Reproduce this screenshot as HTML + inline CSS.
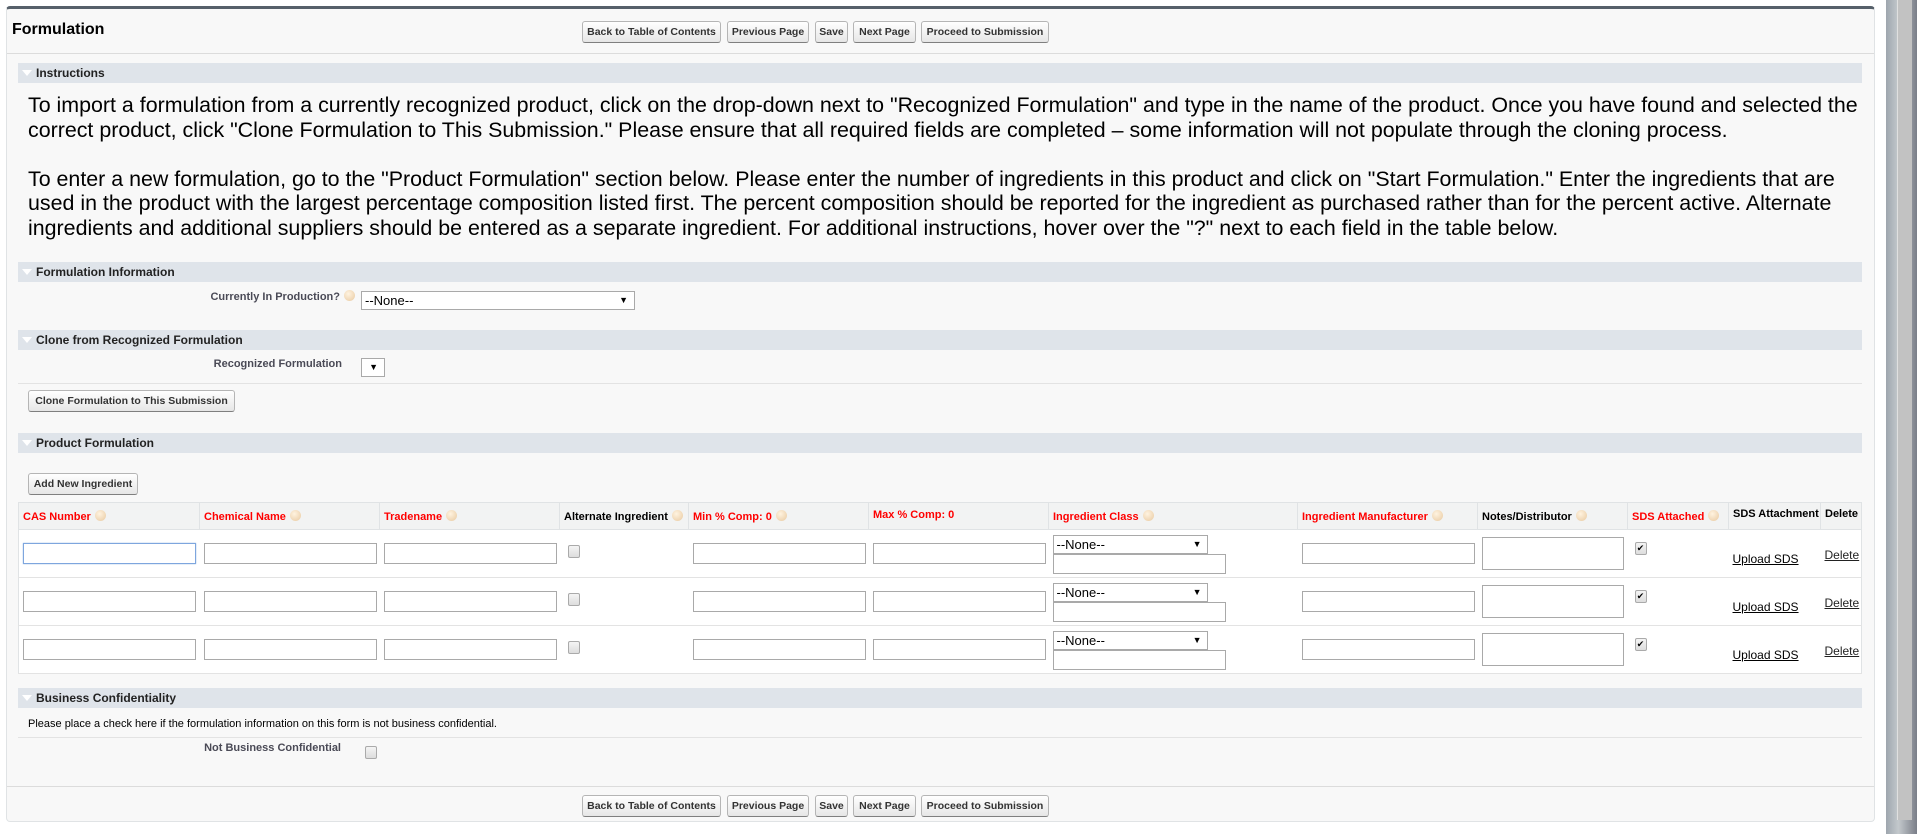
<!DOCTYPE html>
<html><head><style>
*{box-sizing:border-box;margin:0;padding:0}
body{width:1917px;height:834px;background:#fff;font-family:"Liberation Sans",Arial,sans-serif;position:relative;overflow:hidden}
.a{position:absolute}
.panel{left:6px;top:6px;width:1869px;height:816px;background:#f8f8f8;border:1px solid #e0e3e5;border-top:3px solid #56606a;border-radius:4px}
.btn{position:absolute;height:22px;border:1px solid #b5b5b5;border-bottom-color:#7f7f7f;border-radius:3px;background:linear-gradient(#fff,#e6e6e6);font-size:10.5px;font-weight:bold;color:#333;text-align:center;line-height:20px;white-space:nowrap}
.bar{position:absolute;left:18px;width:1844px;height:20px;background:#dfe4ea;font-size:12px;font-weight:bold;color:#222;line-height:20px;padding-left:18px}
.bar:before{content:"";position:absolute;left:4px;top:7px;border-left:5px solid transparent;border-right:5px solid transparent;border-top:6px solid #fff}
.instr{left:28px;width:1830px;font-size:21.4px;line-height:24.5px;color:#000}
.lbl{position:absolute;font-size:11px;font-weight:bold;color:#4a4a56;text-align:right}
.help{display:inline-block;width:11px;height:11px;border-radius:50%;background:radial-gradient(circle at 40% 35%,#fff3e0,#e8c9a0);vertical-align:-1px;margin-left:4px}
.sel{position:absolute;background:#fff;border:1px solid #a9a9a9;font-size:13px;line-height:17px;padding-left:3px;color:#000}
.sel:after{content:"\25BC";position:absolute;right:6px;top:0;font-size:9px}
.hr{position:absolute;left:18px;width:1844px;height:1px;background:#e3e3e3}
table{position:absolute;left:18px;top:502px;width:1844px;border-collapse:collapse;border:1px solid #e0e3e5;background:#fff;table-layout:fixed}
th{height:27px;background:#f2f3f3;border:1px solid #e0e3e5;font-size:11px;font-weight:bold;text-align:left;padding:0 4px;white-space:nowrap;overflow:hidden;color:#000}
th.r{color:#f00}
td{height:48px;border-bottom:1px solid #e3e3e3;padding:0 4px;vertical-align:middle;position:relative}
.in{display:block;width:173px;height:21px;border:1px solid #a9a9a9;background:#fff}
.cb{display:inline-block;width:12px;height:13px;border:1px solid #aaa;border-radius:2px;background:linear-gradient(#f4f4f4,#ddd)}
.ta{display:block;width:142px;height:33px;border:1px solid #a9a9a9;background:#fff}
a{color:#000;font-size:12px;text-decoration:underline}
.dd{position:relative;width:155px;height:19px;border:1px solid #a9a9a9;font-size:13px;padding-left:3px;line-height:17px;margin-top:4px;background:#fff}
</style></head><body>
<div class="a panel"></div>
<div class="a" style="left:12px;top:21px;font-size:16px;font-weight:bold;color:#000">Formulation</div>
<div class="a" style="left:7px;top:53px;width:1867px;height:1px;background:#dcdcdc"></div>
<div class="btn" style="left:582px;top:21px;width:139px">Back to Table of Contents</div>
<div class="btn" style="left:727px;top:21px;width:82px">Previous Page</div>
<div class="btn" style="left:815px;top:21px;width:33px">Save</div>
<div class="btn" style="left:853px;top:21px;width:63px">Next Page</div>
<div class="btn" style="left:921px;top:21px;width:128px">Proceed to Submission</div>

<div class="bar" style="top:63px">Instructions</div>
<div class="a instr" style="top:93px">To import a formulation from a currently recognized product, click on the drop-down next to "Recognized Formulation" and type in the name of the product. Once you have found and selected the correct product, click "Clone Formulation to This Submission." Please ensure that all required fields are completed – some information will not populate through the cloning process.<br><br>To enter a new formulation, go to the "Product Formulation" section below. Please enter the number of ingredients in this product and click on "Start Formulation." Enter the ingredients that are used in the product with the largest percentage composition listed first. The percent composition should be reported for the ingredient as purchased rather than for the percent active. Alternate ingredients and additional suppliers should be entered as a separate ingredient. For additional instructions, hover over the "?" next to each field in the table below.</div>

<div class="bar" style="top:262px">Formulation Information</div>
<div class="lbl" style="left:150px;top:290px;width:205px">Currently In Production?<span class="help"></span></div>
<div class="sel" style="left:361px;top:291px;width:274px;height:19px">--None--</div>

<div class="bar" style="top:330px">Clone from Recognized Formulation</div>
<div class="lbl" style="left:150px;top:358px;width:192px">Recognized Formulation</div>
<div class="sel" style="left:361px;top:358px;width:24px;height:19px"></div>
<div class="hr" style="top:383px"></div>
<div class="btn" style="left:28px;top:390px;width:207px">Clone Formulation to This Submission</div>

<div class="bar" style="top:433px">Product Formulation</div>
<div class="btn" style="left:28px;top:473px;width:110px">Add New Ingredient</div>

<table>
<colgroup><col style="width:181px"><col style="width:180px"><col style="width:180px"><col style="width:129px"><col style="width:180px"><col style="width:180px"><col style="width:249px"><col style="width:180px"><col style="width:150px"><col style="width:101px"><col style="width:92px"><col></colgroup>
<tr>
<th class="r">CAS Number<span class="help"></span></th>
<th class="r">Chemical Name<span class="help"></span></th>
<th class="r">Tradename<span class="help"></span></th>
<th>Alternate Ingredient<span class="help"></span></th>
<th class="r">Min % Comp: 0<span class="help"></span></th>
<th class="r" style="vertical-align:top;padding-top:6px">Max % Comp: 0</th>
<th class="r">Ingredient Class<span class="help"></span></th>
<th class="r">Ingredient Manufacturer<span class="help"></span></th>
<th>Notes/Distributor<span class="help"></span></th>
<th class="r">SDS Attached<span class="help"></span></th>
<th style="vertical-align:top;padding-top:5px">SDS Attachment</th>
<th style="vertical-align:top;padding-top:5px">Delete</th>
</tr>
<tr>
<td><span class="in" style="border:1px solid #7ea6de;box-shadow:0 0 1px #7ea6de"></span></td><td><span class="in"></span></td><td><span class="in"></span></td><td><span class="cb" style="margin-left:4px"></span></td><td><span class="in"></span></td><td><span class="in"></span></td>
<td><div class="dd">--None--<span style="position:absolute;right:5px;font-size:9px">&#9660;</span></div><span class="in" style="height:20px;margin-bottom:2px"></span></td>
<td><span class="in"></span></td><td><span class="ta"></span></td><td><span class="cb" style="margin-left:3px;margin-top:-10px;vertical-align:middle;font-size:9px;line-height:11px;text-align:center">&#10004;</span></td><td style="padding-top:10px"><a>Upload SDS</a></td><td style="vertical-align:top;padding-top:16px"><a style="color:#222">Delete</a></td>
</tr>
<tr>
<td><span class="in"></span></td><td><span class="in"></span></td><td><span class="in"></span></td><td><span class="cb" style="margin-left:4px"></span></td><td><span class="in"></span></td><td><span class="in"></span></td>
<td><div class="dd">--None--<span style="position:absolute;right:5px;font-size:9px">&#9660;</span></div><span class="in" style="height:20px;margin-bottom:2px"></span></td>
<td><span class="in"></span></td><td><span class="ta"></span></td><td><span class="cb" style="margin-left:3px;margin-top:-10px;vertical-align:middle;font-size:9px;line-height:11px;text-align:center">&#10004;</span></td><td style="padding-top:10px"><a>Upload SDS</a></td><td style="vertical-align:top;padding-top:16px"><a style="color:#222">Delete</a></td>
</tr>
<tr>
<td><span class="in"></span></td><td><span class="in"></span></td><td><span class="in"></span></td><td><span class="cb" style="margin-left:4px"></span></td><td><span class="in"></span></td><td><span class="in"></span></td>
<td><div class="dd">--None--<span style="position:absolute;right:5px;font-size:9px">&#9660;</span></div><span class="in" style="height:20px;margin-bottom:2px"></span></td>
<td><span class="in"></span></td><td><span class="ta"></span></td><td><span class="cb" style="margin-left:3px;margin-top:-10px;vertical-align:middle;font-size:9px;line-height:11px;text-align:center">&#10004;</span></td><td style="padding-top:10px"><a>Upload SDS</a></td><td style="vertical-align:top;padding-top:16px"><a style="color:#222">Delete</a></td>
</tr>
</table>

<div class="bar" style="top:688px">Business Confidentiality</div>
<div class="a" style="left:28px;top:718px;font-size:11px;color:#000">Please place a check here if the formulation information on this form is not business confidential.</div>
<div class="hr" style="top:737px"></div>
<div class="lbl" style="left:150px;top:742px;width:191px">Not Business Confidential</div>
<span class="a cb" style="left:365px;top:746px"></span>

<div class="a" style="left:7px;top:786px;width:1867px;height:1px;background:#dcdcdc"></div>
<div class="btn" style="left:582px;top:795px;width:139px">Back to Table of Contents</div>
<div class="btn" style="left:727px;top:795px;width:82px">Previous Page</div>
<div class="btn" style="left:815px;top:795px;width:33px">Save</div>
<div class="btn" style="left:853px;top:795px;width:63px">Next Page</div>
<div class="btn" style="left:921px;top:795px;width:128px">Proceed to Submission</div>

<div class="a" style="left:1886px;top:0;width:31px;height:834px;background:linear-gradient(90deg,#9ea6ae,#c3c8cc 40%,#7a7e88)"></div>
<div class="a" style="left:1897px;top:0;width:15px;height:820px;background:#c2c2c2;border-left:1px solid #e0e0e0"></div>
</body></html>
